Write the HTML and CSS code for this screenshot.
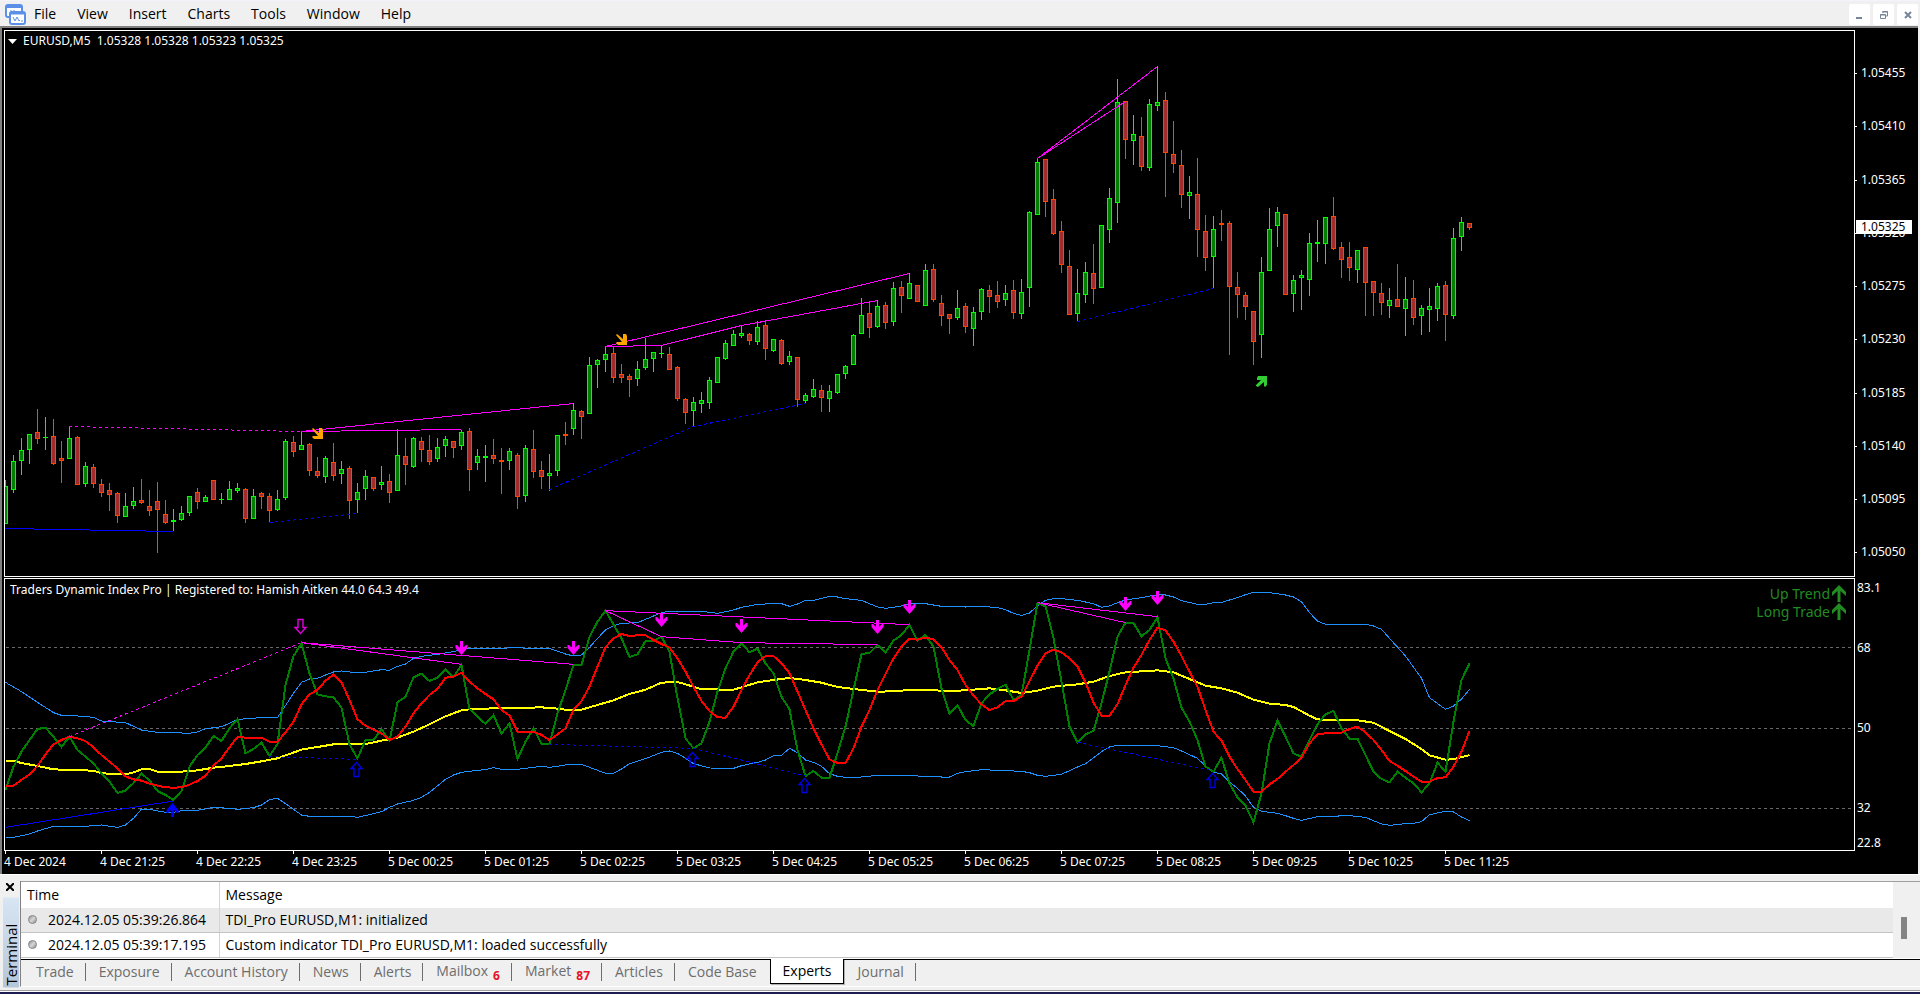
FILE: index.html
```html
<!DOCTYPE html>
<html lang="en">
<head>
    <meta charset="UTF-8">
    <meta name="viewport" content="width=device-width, initial-scale=1.0">
    <title>EURUSD,M5</title>
    <link rel="stylesheet" href="styles.css">
</head>
<body>
<header class="menubar">
    <svg class="app-icon" width="22" height="22" viewBox="0 0 22 22" aria-hidden="true">
        <rect x="1" y="1" width="16" height="12" rx="2" fill="#fff" stroke="#5b8fe8" stroke-width="2"/>
        <path d="M1 3h16" stroke="#5b8fe8" stroke-width="2"/>
        <path d="M4 9h2V6M8 10V7h2" fill="none" stroke="#5b8fe8"/>
        <rect x="5" y="8" width="15" height="12" rx="2" fill="#fff" stroke="#5b8fe8" stroke-width="2"/>
        <path d="M5 9.500h15" stroke="#5b8fe8" stroke-width="2"/>
        <path d="M8 13l2 4 2-4 2 4 1-1M16 17h2" fill="none" stroke="#5b8fe8"/>
    </svg>
    <nav class="menu">
        <button type="button">File</button>
        <button type="button">View</button>
        <button type="button">Insert</button>
        <button type="button">Charts</button>
        <button type="button">Tools</button>
        <button type="button">Window</button>
        <button type="button">Help</button>
    </nav>
    <div class="window-buttons">
        <button type="button" aria-label="Minimize">
            <svg width="21" height="21"><path d="M7 14h6" stroke="#75859a" stroke-width="2"/></svg>
        </button>
        <button type="button" aria-label="Restore">
            <svg width="21" height="21"><path d="M10 9V7.500h4.500V12H13M9 8h6" fill="none" stroke="#75859a"/><path d="M7.500 10.500h5v4h-5zM7 11h6" fill="none" stroke="#75859a"/></svg>
        </button>
        <button type="button" aria-label="Close">
            <svg width="21" height="21"><path d="M8 8l6 6M14 8l-6 6" stroke="#75859a" stroke-width="2"/></svg>
        </button>
    </div>
</header>

<main class="chart">
    <section class="pane">
        <svg class="plot" id="price"></svg>
        <h1 class="pane-title">
            <svg width="9" height="5"><path d="M0 0h9L4.500 5z" fill="#fff"/></svg>
            <span>EURUSD,M5&nbsp; 1.05328 1.05328 1.05323 1.05325</span>
        </h1>
    </section>
    <div class="price-axis">
        <span>1.05455</span>
        <span>1.05410</span>
        <span>1.05365</span>
        <span>1.05320</span>
        <span>1.05275</span>
        <span>1.05230</span>
        <span>1.05185</span>
        <span>1.05140</span>
        <span>1.05095</span>
        <span>1.05050</span>
        <strong class="last-price">1.05325</strong>
    </div>
    <section class="pane">
        <svg class="plot" id="tdi"></svg>
        <h2 class="pane-title">Traders Dynamic Index Pro | Registered to: Hamish Aitken 44.0 64.3 49.4</h2>
        <div class="signals">
            <p>Up Trend
                <svg width="14" height="17"><path d="M7 0l7 7v4L8.500 6v11h-3V6L0 11V7z" fill="#228b22"/></svg>
            </p>
            <p>Long Trade
                <svg width="14" height="17"><path d="M7 0l7 7v4L8.500 6v11h-3V6L0 11V7z" fill="#228b22"/></svg>
            </p>
        </div>
    </section>
    <div class="level-axis">
        <span>83.1</span>
        <span>68</span>
        <span>50</span>
        <span>32</span>
        <span>22.8</span>
    </div>
    <div class="time-axis">
        <span>4 Dec 2024</span>
        <span>4 Dec 21:25</span>
        <span>4 Dec 22:25</span>
        <span>4 Dec 23:25</span>
        <span>5 Dec 00:25</span>
        <span>5 Dec 01:25</span>
        <span>5 Dec 02:25</span>
        <span>5 Dec 03:25</span>
        <span>5 Dec 04:25</span>
        <span>5 Dec 05:25</span>
        <span>5 Dec 06:25</span>
        <span>5 Dec 07:25</span>
        <span>5 Dec 08:25</span>
        <span>5 Dec 09:25</span>
        <span>5 Dec 10:25</span>
        <span>5 Dec 11:25</span>
    </div>
</main>

<section class="terminal">
    <div class="terminal-side">
        <button type="button" class="close" aria-label="Close">
            <svg width="8" height="8"><path d="M0 0l8 8M8 0L0 8" stroke="#000" stroke-width="2"/></svg>
        </button>
        <span class="side-label">Terminal</span>
    </div>
    <div class="terminal-main">
        <div class="log">
            <table>
                <thead>
                <tr><th>Time</th><th>Message</th></tr>
                </thead>
                <tbody>
                <tr><td><i class="dot"></i>2024.12.05 05:39:26.864</td><td>TDI_Pro EURUSD,M1: initialized</td></tr>
                <tr><td><i class="dot"></i>2024.12.05 05:39:17.195</td><td>Custom indicator TDI_Pro EURUSD,M1: loaded successfully</td></tr>
                </tbody>
            </table>
            <div class="scrollbar"><span class="thumb"></span></div>
        </div>
        <nav class="tabs">
            <button type="button">Trade</button>
            <button type="button">Exposure</button>
            <button type="button">Account History</button>
            <button type="button">News</button>
            <button type="button">Alerts</button>
            <button type="button">Mailbox<b>6</b></button>
            <button type="button">Market<b>87</b></button>
            <button type="button">Articles</button>
            <button type="button">Code Base</button>
            <button type="button" class="active">Experts</button>
            <button type="button">Journal</button>
        </nav>
    </div>
</section>
<footer class="statusbar"></footer>

<script src="chart.js"></script>
</body>
</html>
```
FILE: styles.css
```css
* {
    box-sizing: border-box;
}

body {
    display: flex;
    flex-direction: column;
    height: 100vh;
    margin: 0;
    background-color: #f0f0f0;
    font-family: "Open Sans", "Noto Sans", sans-serif;
    font-size: 15px;
    color: #000;
    overflow: hidden;
}

button {
    padding: 0;
    border: none;
    background: none;
    font: inherit;
    color: inherit;
}

/* Menu bar */
.menubar {
    display: flex;
    align-items: center;
    flex: none;
    height: 26px;
    padding: 2px 2px 0 5px;
    background-color: #f0f0f0;
    border-top: 1px solid #f3f3fa;
}

.app-icon {
    margin-right: 7px;
}

.menu {
    display: flex;
    gap: 21px;
    flex: 1;
    padding-bottom: 2px;
    font-size: 14px;
}

.window-buttons {
    display: flex;
    gap: 3px;
}

.window-buttons button {
    width: 21px;
    height: 21px;
    background-color: #fff;
    border-radius: 2px;
}

.window-buttons svg {
    display: block;
}

/* Chart window */
.chart {
    display: grid;
    grid-template-columns: 1fr 63px;
    grid-template-rows: minmax(0, 1fr) 1px 273px 23px;
    flex: 1;
    min-height: 0;
    margin-right: 2px;
    padding: 2px 0 0 2px;
    background-color: #000;
    border-top: 2px solid #808080;
    border-left: 2px solid #808080;
    color: #fff;
    font-family: "Noto Sans", sans-serif;
    font-size: 12px;
    line-height: 16px;
}

.pane {
    position: relative;
    border: 1px solid #fff;
}

.plot {
    position: absolute;
    width: 100%;
    height: 100%;
    shape-rendering: crispEdges;
}

.pane-title {
    position: relative;
    display: flex;
    align-items: center;
    gap: 6px;
    margin: 2px 3px;
    font-size: 12px;
    font-weight: normal;
}

h2.pane-title {
    margin: 3px 5px;
}

.price-axis {
    position: relative;
    display: flex;
    flex-direction: column;
    justify-content: space-between;
    padding: 35px 0 16px;
}

.price-axis span {
    position: relative;
    padding-left: 6px;
}

.price-axis span::before {
    content: "";
    position: absolute;
    left: 0;
    top: 8px;
    width: 2px;
    height: 1px;
    background-color: #fff;
}

.last-price {
    position: absolute;
    left: 1px;
    top: 190px;
    width: 56px;
    height: 14px;
    padding-left: 5px;
    background-color: #fff;
    color: #000;
    font-weight: normal;
    line-height: 14px;
}

.pane:nth-of-type(2),
.level-axis {
    grid-row: 3;
}

.level-axis {
    display: grid;
    grid-template-rows: 60px 80px 80px 35px 16px;
    padding: 2px 0 0 2px;
}

.signals {
    position: absolute;
    top: 6px;
    right: 8px;
    color: #228b22;
    font-size: 14px;
    line-height: 17px;
    text-align: right;
}

.signals p {
    display: flex;
    justify-content: flex-end;
    gap: 2px;
    margin: 0 0 1px;
}

.time-axis {
    grid-column: 1 / 3;
    grid-row: 4;
    display: flex;
    padding-top: 3px;
}

.time-axis span {
    position: relative;
    flex: none;
    width: 96px;
    white-space: nowrap;
}

.time-axis span::before {
    content: "";
    position: absolute;
    left: 1px;
    top: -3px;
    width: 1px;
    height: 3px;
    background-color: #fff;
}

/* Terminal */
.terminal {
    display: flex;
    flex: none;
    padding: 6px 0 3px 3px;
    border-top: 1px solid #fff;
}

.terminal-side {
    display: flex;
    flex-direction: column;
    width: 17px;
}

.close {
    width: 8px;
    height: 8px;
    margin: 2px 0 7px 3px;
}

.close svg {
    display: block;
}

.side-label {
    flex: 1;
    width: 16px;
    padding-top: 2px;
    background: linear-gradient(#b6c6da, #d8e5f3);
    line-height: 16px;
    writing-mode: vertical-rl;
    transform: rotate(180deg);
}

.terminal-main {
    flex: 1;
    border-left: 1px solid #808080;
    border-bottom: 1px solid #fff;
}

.log {
    display: flex;
    background-color: #fff;
    border-top: 1px solid #a0a0a0;
}

.log table {
    flex: 1;
    border-collapse: collapse;
    table-layout: fixed;
}

.log th,
.log td {
    height: 25px;
    padding: 0 0 0 6px;
    border-bottom: 1px solid #c4c4c4;
    font-size: 14px;
    font-weight: normal;
    line-height: 20px;
    text-align: left;
}

.log th {
    height: 26px;
    border: none;
}

.log th:first-child,
.log td:first-child {
    width: 198px;
    border-right: 1px solid #d4d4d4;
}

.log tbody tr:first-child {
    background-color: #e9e9e9;
}

.dot {
    display: inline-block;
    width: 9px;
    height: 9px;
    margin: 0 11px 1px 1px;
    border: 1px solid #8a8a8a;
    border-radius: 50%;
    background: linear-gradient(135deg, #8c8c8c, #d6d6d6, #8c8c8c);
}

.scrollbar {
    display: flex;
    justify-content: center;
    width: 27px;
    padding: 35px 6px 0 0;
    background-color: #f0f0f0;
}

.thumb {
    width: 6px;
    height: 22px;
    background-color: #858585;
}

.tabs {
    display: flex;
    gap: 1px;
    height: 28px;
    padding-left: 3px;
    border-top: 1px solid #fff;
    box-shadow: inset 0 1px #000;
    color: #6d6d6d;
    font-size: 14px;
}

.tabs button {
    position: relative;
    height: 25px;
    padding: 0 12px;
    line-height: 24px;
}

.tabs button::after {
    content: "";
    position: absolute;
    right: 0;
    top: 4px;
    width: 1px;
    height: 18px;
    background-color: #6d6d6d;
}

.tabs button:nth-child(9)::after,
.tabs .active::after {
    display: none;
}

.tabs .active {
    background-color: #fff;
    border: 1px solid #000;
    border-top: none;
    box-shadow: 1px 1px #b0b0b0;
    color: #000;
}

.tabs b {
    position: relative;
    top: 4px;
    margin-left: 5px;
    color: #e81123;
    font-size: 12px;
}

.statusbar {
    flex: none;
    height: 4px;
    background-color: #1d1d52;
    border-top: 1px solid #a0a0a0;
    box-shadow: inset 0 1px #fff;
}
```
FILE: chart.js
```js
const SVG = 'http://www.w3.org/2000/svg';
const BAR = 8;

// one entry per bar: direction, high, body top, body bottom, low
const candles = `
G480,486,524,524 G455,461,490,493 G438,450,461,475 G434,434,450,464 R409,432,439,444 G417,437,438,450
R419,436,464,465 R441,458,461,483 G426,438,459,459 R436,437,485,485 G462,466,484,487 R464,467,484,488
R479,484,493,497 R483,490,495,511 R492,493,516,523 G493,506,517,517 G487,501,506,509 R479,500,503,504
R490,506,511,516 R482,501,510,553 R500,514,523,524 G509,520,522,531 G506,513,520,521 G496,496,513,516
R488,492,502,509 G495,497,502,502 R480,480,500,500 G493,499,500,504 G481,489,500,500 G483,488,491,493
R488,489,519,523 G489,496,519,519 R492,493,497,509 R493,496,511,523 G490,499,510,511 G439,441,498,500
R436,442,452,457 G431,445,450,450 R443,444,471,476 R457,471,476,478 G456,458,477,483 R443,462,476,481
G461,469,474,484 R466,468,501,519 G483,492,500,513 G470,476,489,500 R477,477,489,491 G466,482,485,490
R474,481,493,503 G429,455,491,491 R438,456,465,485 G437,438,467,468 R437,441,450,462 R435,450,462,465
G438,447,459,462 G436,439,446,457 R441,441,448,458 G430,432,446,450 R428,431,470,491 G449,456,463,470
G445,456,458,482 R439,455,459,464 R448,460,462,494 G448,451,461,470 R453,455,497,509 G445,448,496,502
R430,449,472,478 R461,470,477,489 G454,473,476,491 G435,435,471,476 R422,434,436,445 G403,410,429,435
R410,411,417,439 G357,365,414,414 G359,360,365,388 G346,354,360,372 R347,353,378,383 R364,374,378,383
R374,376,380,397 G361,369,379,386 G338,359,368,370 G352,352,359,372 G346,353,354,358 R347,354,370,370
R366,367,399,401 R398,399,413,424 G397,402,411,426 G392,400,404,413 G377,380,403,409 G357,357,383,383
G340,343,359,360 G330,334,346,346 G325,333,336,338 R333,334,341,345 G321,327,342,345 R320,325,349,360
G339,339,351,352 R339,340,364,365 G351,356,362,365 R357,357,400,407 G393,395,401,403 G379,389,397,398
R385,390,398,412 G385,391,399,412 G374,374,393,394 G365,366,374,379 G334,335,365,365 G298,315,334,334
R302,313,328,338 G300,306,327,328 R302,305,323,329 G282,288,322,326 R281,287,296,313 G273,283,299,299
R285,285,302,302 G264,270,306,306 R264,269,300,302 R295,303,316,326 R314,314,319,334 G290,308,318,320
R303,306,327,333 G307,312,329,346 G288,289,312,320 R285,290,297,313 R281,295,302,308 G285,293,300,306
R280,290,313,319 G279,292,314,319 G211,212,288,307 G159,162,215,215 R159,159,202,217 R189,199,234,235
R221,231,265,273 R250,266,315,315 G269,293,314,322 G262,272,295,303 R244,273,289,304 G225,225,288,288
G188,198,230,243 G79,102,203,223 R101,101,140,159 G115,134,141,165 R117,136,167,171 G99,104,168,171
G66,102,106,111 R92,100,153,197 R121,154,164,173 R150,165,195,208 G176,192,196,219 R158,194,230,257
R215,231,258,271 G216,229,257,288 R210,223,225,241 R221,223,287,355 R272,287,295,318 R292,295,307,320
R311,311,342,365 G257,272,335,358 G208,229,271,271 G207,212,226,247 R214,214,295,295 G275,280,294,312
G270,275,278,310 G233,243,280,296 G220,242,244,262 G217,217,244,264 R197,216,249,250 R242,247,260,278
R242,257,268,281 G250,250,270,283 R247,247,283,316 R281,281,293,316 R283,293,303,315 G288,300,306,318
R264,299,307,307 G277,299,309,336 R280,298,318,325 G305,308,316,335 G288,306,310,332 G283,286,309,321
R281,285,315,341 G228,238,316,319 G217,222,237,251 R223,223,228,230`.trim().split(/\s+/);

// trend lines on the price pane: [bar, y] pairs
const priceLines = [
    { color: '#f0f', dash: true, points: [[8, 426], [37, 431]] },
    { color: '#f0f', points: [[37, 431], [71, 403]] },
    { color: '#f0f', points: [[37, 431], [57, 429]] },
    { color: '#f0f', points: [[75, 346], [113, 273]] },
    { color: '#f0f', points: [[75, 346], [82, 345], [92, 325], [109, 300]] },
    { color: '#f0f', points: [[129, 158], [144, 66]] },
    { color: '#f0f', points: [[129, 158], [140, 101]] },
    { color: '#00f', points: [[0, 528], [21, 531]] },
    { color: '#00f', dash: true, points: [[33, 522], [44, 513]] },
    { color: '#00f', dash: true, points: [[68, 489], [86, 426], [100, 403]] },
    { color: '#00f', dash: true, points: [[134, 321], [151, 288]] }
];

// RSI price line and signal line, one value per bar, in thirds of a pixel
const rsi = [
    645, 575, 530, 495, 462, 458, 485, 516, 485, 525, 545, 565, 595, 620, 654, 647, 624, 596, 616, 648,
    660, 675, 648, 575, 540, 518, 483, 498, 460, 432, 535, 522, 503, 543, 507, 330, 243, 205, 295, 358,
    364, 367, 398, 508, 550, 495, 495, 462, 497, 382, 365, 307, 296, 318, 308, 284, 306, 270, 402, 424,
    447, 420, 476, 445, 552, 500, 460, 507, 507, 415, 345, 270, 270, 185, 140, 107, 148, 190, 246, 238,
    198, 197, 185, 230, 370, 490, 520, 505, 440, 350, 280, 230, 204, 232, 221, 265, 295, 365, 403, 525,
    603, 588, 608, 608, 535, 455, 345, 237, 234, 210, 232, 197, 180, 150, 197, 180, 215, 340, 416, 390,
    435, 453, 385, 358, 342, 329, 375, 360, 225, 84, 94, 190, 320, 455, 502, 478, 468, 385, 290, 185,
    143, 144, 184, 165, 127, 250, 310, 398, 440, 495, 575, 590, 548, 625, 667, 692, 742, 655, 505, 437,
    485, 535, 545, 495, 448, 418, 408, 460, 491, 491, 540, 590, 612, 622, 590, 608, 625, 652, 625, 563,
    590, 440, 315, 265
];
const signal = [
    632, 632, 615, 598, 573, 538, 508, 495, 485, 490, 498, 517, 540, 560, 580, 604, 613, 617, 626, 632,
    637, 638, 637, 629, 618, 602, 572, 550, 517, 486, 488, 488, 488, 500, 500, 472, 440, 388, 358, 345,
    317, 299, 322, 375, 433, 452, 464, 475, 495, 485, 455, 415, 385, 360, 342, 308, 305, 293, 320, 340,
    357, 373, 405, 422, 470, 470, 470, 480, 495, 478, 460, 405, 378, 335, 275, 217, 190, 177, 183, 181,
    181, 195, 207, 218, 250, 290, 335, 378, 408, 427, 428, 395, 345, 300, 262, 243, 243, 265, 295, 350,
    405, 460, 508, 553, 564, 564, 520, 455, 405, 345, 297, 250, 215, 191, 194, 188, 193, 217, 255, 285,
    330, 362, 388, 405, 397, 378, 378, 365, 318, 272, 235, 224, 232, 250, 275, 322, 383, 422, 422, 388,
    330, 278, 240, 195, 158, 166, 200, 243, 290, 335, 405, 470, 497, 545, 582, 615, 650, 650, 628, 612,
    590, 570, 548, 505, 478, 475, 474, 473, 462, 455, 472, 495, 525, 558, 572, 588, 605, 620, 620, 609,
    607, 575, 530, 468
];

// slower lines: "bar value" pairs
const baseLine = '0 558,1 558,2 564,4 573,6 583,8 585,11 587,12 595,15 598,16 592,17 583,18 582,19 590,20 591,23 589,24 586,26 578,28 573,30 567,32 559,34 550,37 524,41 508,45 507,47 497,49 488,51 470,53 448,55 424,57 406,58 403,61 400,64 399,67 397,69 401,70 404,72 404,74 390,76 376,78 357,80 344,82 323,84 321,86 335,87 343,91 344,92 337,94 322,96 315,98 309,100 315,102 323,104 336,106 342,109 350,111 349,113 345,116 346,118 348,120 346,123 340,125 346,127 354,129 347,131 335,134 328,136 320,138 303,140 292,144 286,146 292,148 312,150 332,152 340,154 353,156 374,158 386,160 390,161 396,163 422,164 433,166 436,169 436,171 443,173 468,175 492,177 522,178 541,180 554,181 553,183 540';
const upperBand = '0 322,2 350,4 382,6 413,7 421,9 423,11 427,12 438,15 443,17 465,19 472,21 473,23 475,24 471,25 461,27 455,28 445,29 433,31 430,32 427,33 429,34 428,36 355,37 322,38 312,39 310,40 300,41 291,42 288,43 291,45 292,47 284,48 286,49 274,50 267,51 250,52 244,54 238,56 230,57 223,58 220,62 220,64 217,65 220,68 220,70 237,71 243,72 240,73 217,74 190,75 165,76 152,77 145,79 143,80 133,82 113,83 109,87 109,89 115,91 105,92 97,94 88,96 86,97 86,98 94,99 87,100 76,101 76,103 64,104 66,105 71,107 76,108 86,109 96,110 100,112 93,113 86,115 86,117 94,120 96,122 94,124 98,125 104,126 115,127 121,128 114,129 92,130 76,131 71,132 71,134 76,136 86,137 97,138 93,139 83,140 75,142 68,144 59,145 60,146 66,147 77,149 88,150 88,151 83,152 82,154 68,155 59,156 52,158 53,160 60,161 66,162 80,163 113,164 138,165 148,170 148,171 153,172 163,173 190,175 243,177 310,178 368,180 403,181 393,182 372,183 343';
const lowerBand = '0 787,1 787,3 777,4 768,6 754,10 754,12 750,14 757,15 750,16 730,17 702,18 703,20 712,21 712,22 707,24 706,26 697,28 700,29 703,31 698,32 690,33 674,34 670,35 686,37 720,38 724,43 724,44 727,46 716,47 710,48 697,49 687,51 676,52 667,53 652,55 613,56 600,57 592,59 586,60 584,61 578,62 583,64 583,67 574,68 577,70 570,72 568,73 577,75 595,76 595,77 582,78 566,80 551,82 532,83 528,84 535,85 550,86 566,88 579,91 580,92 572,94 562,95 555,96 542,97 541,98 520,99 533,100 555,101 562,102 574,103 596,104 604,105 607,107 606,109 601,113 602,117 606,118 606,119 595,120 590,122 584,124 586,127 589,128 593,129 601,130 604,132 598,134 576,135 566,137 530,138 516,139 511,144 512,146 518,147 528,149 550,150 573,151 592,152 597,153 622,154 640,155 663,156 697,157 709,159 715,160 722,161 730,162 736,164 725,168 722,170 727,172 747,173 751,175 746,176 745,177 740,178 719,180 709,181 711,182 726,183 737';

const tdiLines = [
    { color: '#f0f', dash: true, points: [[8, 485], [37, 203]] },
    { color: '#f0f', points: [[37, 203], [57, 268]] },
    { color: '#f0f', points: [[37, 203], [71, 268]] },
    { color: '#f0f', points: [[75, 107], [82, 185], [92, 203], [109, 209]] },
    { color: '#f0f', points: [[75, 107], [113, 149]] },
    { color: '#f0f', points: [[129, 83], [140, 143]] },
    { color: '#f0f', points: [[129, 83], [144, 125]] },
    { color: '#00f', points: [[0, 757], [21, 678]] },
    { color: '#00f', dash: true, points: [[33, 545], [44, 553]] },
    { color: '#00f', dash: true, points: [[68, 508], [86, 520], [100, 603]] },
    { color: '#00f', dash: true, points: [[134, 502], [151, 588]] }
];

const shapes = {
    down: 'M-1.500 0h3v7l3-3h1.500v3L0 14l-6-7V4h1.500l3 3z',
    up: 'M-1.500 14h3V7l3 3h1.500V7L0 0l-6 7v3h1.500l3-3z',
    hollowDown: 'M-2.500 .5h5v8h3L0 14.500l-5.500-6h3z',
    hollowUp: 'M-2.500 14.500h5v-8h3L0 .5l-5.500 6h3z',
    downRight: 'M0 1l1-1 6 5V0h3l1 2v9H2L0 9l1-1h5z',
    upRight: 'M2 0h9v9l-2 2-1-1V6l-6 5-2-1v-1l5-5H1V2z'
};

function add(parent, name, attrs) {
    const el = document.createElementNS(SVG, name);
    for (const key in attrs) {
        el.setAttribute(key, attrs[key]);
    }
    parent.appendChild(el);
    return el;
}

function barX(i) {
    return i * BAR + 0.5;
}

function polyline(parent, points, toY, color, width, dash) {
    const attrs = {
        points: points.map(([i, v]) => barX(i) + ',' + toY(v)).join(' '),
        fill: 'none',
        stroke: color,
        'stroke-width': width
    };
    if (dash) {
        attrs['stroke-dasharray'] = '3 3';
    }
    add(parent, 'polyline', attrs);
}

function marker(parent, shape, color, x, y) {
    const hollow = shape.startsWith('hollow');
    add(parent, 'path', {
        d: shapes[shape],
        transform: `translate(${x} ${y})`,
        fill: hollow ? 'none' : color,
        stroke: hollow ? color : 'none',
        'stroke-width': 1.4,
        'shape-rendering': 'auto'
    });
}

function drawPrice() {
    const svg = document.getElementById('price');
    const toY = v => v - 31 + 0.5;

    candles.forEach((row, i) => {
        const up = row[0] === 'G';
        const [high, top, bottom, low] = row.slice(1).split(',').map(v => v - 31);
        const line = up ? '#00ff00' : '#ff4500';
        const x = i * BAR;
        add(svg, 'rect', { x: x, y: high, width: 1, height: low - high, fill: line });
        add(svg, 'rect', { x: x - 2, y: top, width: 5, height: bottom - top, fill: line });
        if (bottom - top > 2) {
            add(svg, 'rect', { x: x - 1, y: top + 1, width: 3, height: bottom - top - 2, fill: up ? '#008000' : '#a52a2a' });
        }
    });

    priceLines.forEach(l => polyline(svg, l.points, toY, l.color, 1, l.dash));
    marker(svg, 'downRight', '#ffa500', 307, 397);
    marker(svg, 'downRight', '#ffa500', 611, 303);
    marker(svg, 'upRight', '#32cd32', 1251, 345);
}

function drawTdi() {
    const svg = document.getElementById('tdi');
    const toY = v => v / 3 - 4;
    const parse = text => text.split(',').map(p => p.split(' ').map(Number));
    const dense = list => list.map((v, i) => [i, v]);

    [68.5, 149.5, 229.5].forEach(y => {
        add(svg, 'line', { x1: 1, y1: y, x2: '100%', y2: y, stroke: '#696969', 'stroke-dasharray': '3 3' });
    });

    polyline(svg, parse(upperBand), toY, '#1e90ff', 1);
    polyline(svg, parse(lowerBand), toY, '#1e90ff', 1);
    polyline(svg, parse(baseLine), toY, '#ffff00', 2);
    polyline(svg, dense(rsi), toY, '#008000', 2);
    polyline(svg, dense(signal), toY, '#ff0000', 2);
    tdiLines.forEach(l => polyline(svg, l.points, toY, l.color, 1, l.dash));

    marker(svg, 'hollowDown', '#e000e0', 295.5, 40);
    [[456, 62], [568, 62], [656, 34], [736, 40], [872, 41], [904, 21], [1120, 18], [1152, 12]].forEach(([x, y]) => {
        marker(svg, 'down', '#ff00ff', x + 0.5, y);
    });
    marker(svg, 'up', '#0000ff', 167.5, 224);
    [[351, 183], [687, 173], [799, 199], [1207, 194]].forEach(([x, y]) => {
        marker(svg, 'hollowUp', '#0000e6', x + 0.5, y);
    });
}

drawPrice();
drawTdi();
```
